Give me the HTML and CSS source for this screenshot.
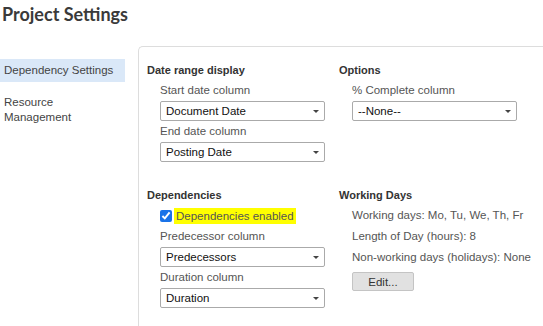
FILE: index.html
```html
<!DOCTYPE html>
<html lang="en">
<head>
  <meta charset="UTF-8">
  <title>Project Settings</title>
  <link rel="stylesheet" href="styles.css">
</head>
<body>
  <!-- HEADER -->
  <h1 class="page-title">Project Settings</h1>

  <div class="settings">
    <!-- SIDE NAV -->
    <nav class="side-nav">
      <a class="side-item active">Dependency Settings</a>
      <a class="side-item">Resource Management</a>
    </nav>

    <!-- PANEL -->
    <div class="panel">
      <div class="grid">
        <section class="group">
          <h3>Date range display</h3>
          <div class="field">
            <label>Start date column</label>
            <div class="select"><span>Document Date</span><i class="caret"></i></div>
          </div>
          <div class="field">
            <label>End date column</label>
            <div class="select"><span>Posting Date</span><i class="caret"></i></div>
          </div>
        </section>

        <section class="group">
          <h3>Options</h3>
          <div class="field">
            <label>% Complete column</label>
            <div class="select"><span>--None--</span><i class="caret"></i></div>
          </div>
        </section>

        <section class="group">
          <h3>Dependencies</h3>
          <div class="field check-row">
            <input type="checkbox" checked>
            <span class="hl">Dependencies enabled</span>
          </div>
          <div class="field">
            <label>Predecessor column</label>
            <div class="select"><span>Predecessors</span><i class="caret"></i></div>
          </div>
          <div class="field">
            <label>Duration column</label>
            <div class="select"><span>Duration</span><i class="caret"></i></div>
          </div>
        </section>

        <section class="group">
          <h3>Working Days</h3>
          <div class="field">
            <p class="info">Working days: Mo, Tu, We, Th, Fr</p>
            <p class="info">Length of Day (hours): 8</p>
            <p class="info">Non-working days (holidays): None</p>
            <button class="btn">Edit...</button>
          </div>
        </section>
      </div>
    </div>
  </div>
</body>
</html>
```

FILE: styles.css
```css
* {
  margin: 0;
  padding: 0;
  box-sizing: border-box;
}

body {
  font-family: 'Liberation Sans', Arial, sans-serif;
  font-size: 11.5px;
  color: #555;
  background: #fff;
  height: 100vh;
  overflow: hidden;
}

/* HEADER */
.page-title {
  font-family: 'Lato', sans-serif;
  font-size: 18px;
  font-weight: 700;
  color: #3a3a3a;
  line-height: 28px;
  padding-left: 2px;
  margin-bottom: 18px;
}

.settings {
  display: flex;
  gap: 13px;
}

/* SIDE NAV */
.side-nav {
  width: 125px;
  padding-top: 13px;
  display: flex;
  flex-direction: column;
  gap: 9px;
}

.side-item {
  display: block;
  padding: 4px 4px;
  line-height: 15px;
  color: #444;
  cursor: pointer;
}

.side-item.active {
  background: #dae8f8;
}

/* PANEL */
.panel {
  flex: 1;
  border-top: 1px solid #ddd;
  border-left: 1px solid #ddd;
  border-top-left-radius: 5px;
  padding: 13px 0 0 8px;
  height: calc(100vh - 46px);
}

.grid {
  display: grid;
  grid-template-columns: 192px 1fr;
  row-gap: 23px;
}

.group h3 {
  font-size: 11px;
  font-weight: 700;
  color: #333;
  line-height: 20px;
}

.field {
  padding-left: 13px;
}

.field label {
  display: block;
  line-height: 21px;
}

.select {
  width: 165px;
  height: 20px;
  border: 1px solid #aaa;
  border-radius: 2px;
  background: #fff;
  color: #111;
  display: flex;
  align-items: center;
  justify-content: space-between;
  padding: 0 5px 0 5px;
}

.caret {
  width: 0;
  height: 0;
  border-left: 3px solid transparent;
  border-right: 3px solid transparent;
  border-top: 3px solid #444;
}

.check-row {
  display: flex;
  align-items: center;
  height: 21px;
}

.check-row input {
  width: 12px;
  height: 12px;
  margin: 0 2px 0 0;
  accent-color: #1a73e8;
}

.hl {
  background: #ffff00;
  padding: 2px 2px;
  color: #555;
}

.info {
  line-height: 21px;
}

.btn {
  margin-top: 4px;
  width: 62px;
  height: 19px;
  font-family: inherit;
  font-size: 11.5px;
  color: #333;
  background: #e1e1e1;
  border: 1px solid #c4c4c4;
  border-radius: 2px;
}
```
